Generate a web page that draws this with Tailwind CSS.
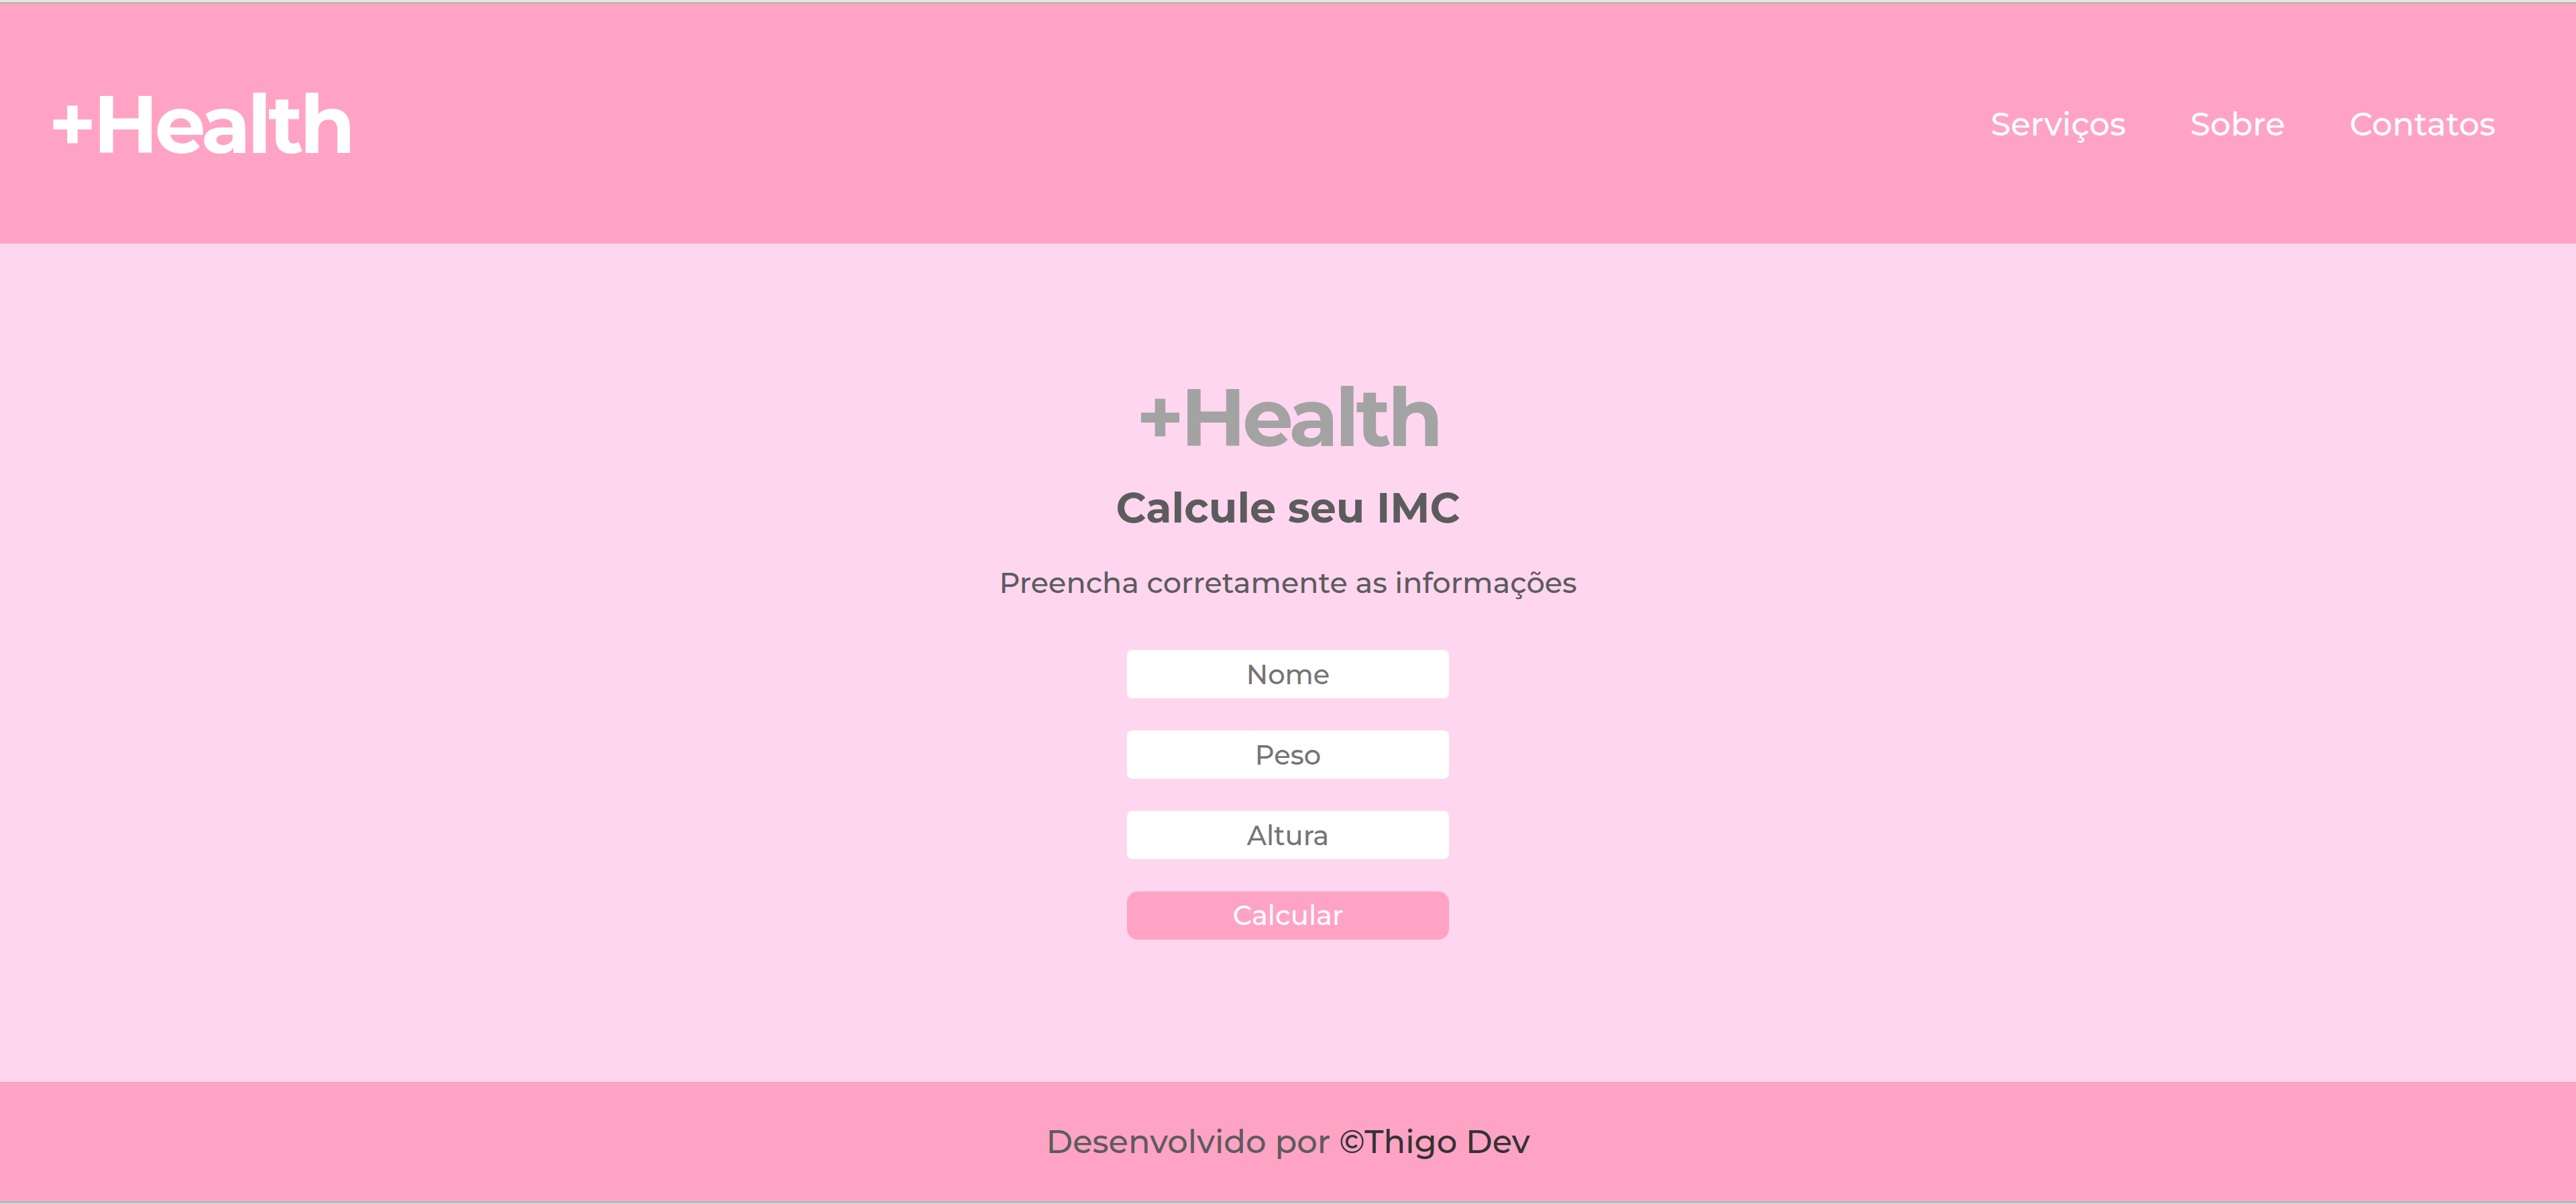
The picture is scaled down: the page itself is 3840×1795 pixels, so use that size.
<!DOCTYPE html>
<html lang="pt-BR">
<head>
<meta charset="UTF-8">
<meta name="viewport" content="width=device-width, initial-scale=1.0">
<title>+Health</title>
<script src="https://cdn.jsdelivr.net/npm/@tailwindcss/browser@4"></script>
</head>
<body class="flex min-h-screen flex-col bg-[#ffd6ef] font-['Montserrat','Inter',sans-serif] font-medium text-[#5c5c5c]">
  <header class="border-t-3 border-[#e8e6e2] bg-[#ffa3c4]">
    <div class="flex items-center justify-between border-t-3 border-[#bcb8b4] px-[72px] pt-[104px] pb-[103px]">
      <a href="#" class="text-[120px] leading-[150px] font-bold tracking-[-5px] text-white">+Health</a>
      <nav class="flex gap-24 pr-12 text-5xl text-white">
        <a href="#">Serviços</a>
        <a href="#">Sobre</a>
        <a href="#">Contatos</a>
      </nav>
    </div>
  </header>

  <main class="flex grow flex-col items-center justify-center">
    <p class="text-[120px] leading-[150px] font-bold tracking-[-5px] text-[#a3a3a3]">+Health</p>
    <h1 class="mt-5 text-[62px] leading-20 font-bold">Calcule seu IMC</h1>
    <p class="mt-11 text-[43px] leading-14">Preencha corretamente as informações</p>
    <form class="mt-18 flex w-[480px] flex-col gap-12 pb-7 text-[40px]">
      <input type="text" aria-label="Nome" placeholder="Nome" class="h-18 rounded-lg bg-white text-center placeholder:text-[#757575]">
      <input type="text" aria-label="Peso" placeholder="Peso" class="h-18 rounded-lg bg-white text-center placeholder:text-[#757575]">
      <input type="text" aria-label="Altura" placeholder="Altura" class="h-18 rounded-lg bg-white text-center placeholder:text-[#757575]">
      <button type="button" class="h-18 rounded-2xl bg-[#ffa3c4] text-white">Calcular</button>
    </form>
  </main>

  <footer class="border-b border-[#d8eeea] bg-[#ffa3c4]">
    <p class="border-b-3 border-[#a8c0be] py-[59px] text-center text-5xl leading-[60px]">Desenvolvido por <a href="#" class="text-[#333333]">©Thigo Dev</a></p>
  </footer>
</body>
</html>
